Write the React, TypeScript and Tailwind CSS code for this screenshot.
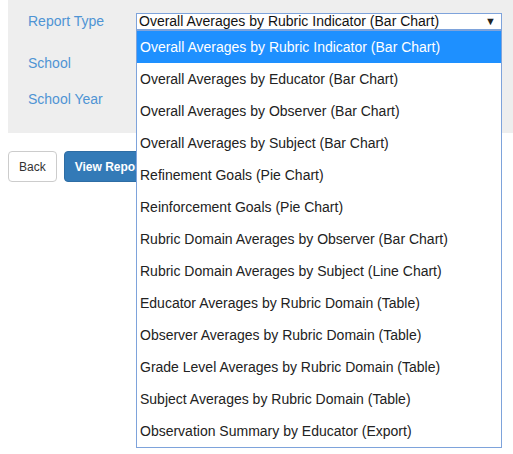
import { useState } from 'react';

const reportTypes = [
  'Overall Averages by Rubric Indicator (Bar Chart)',
  'Overall Averages by Educator (Bar Chart)',
  'Overall Averages by Observer (Bar Chart)',
  'Overall Averages by Subject (Bar Chart)',
  'Refinement Goals (Pie Chart)',
  'Reinforcement Goals (Pie Chart)',
  'Rubric Domain Averages by Observer (Bar Chart)',
  'Rubric Domain Averages by Subject (Line Chart)',
  'Educator Averages by Rubric Domain (Table)',
  'Observer Averages by Rubric Domain (Table)',
  'Grade Level Averages by Rubric Domain (Table)',
  'Subject Averages by Rubric Domain (Table)',
  'Observation Summary by Educator (Export)',
];

export default function App() {
  const [selected, setSelected] = useState(0);

  return (
    <div className="w-[513px] h-[454px] bg-white text-[14px] font-['Liberation_Sans',Arial,sans-serif] overflow-hidden">
      {/* Filter panel */}
      <div className="ml-2 h-[133px] bg-[#eeeeee] pl-5 pt-[5px]">
        <div className="flex h-[32px] items-center">
          <label className="w-[108px] text-[#4f94d4]">Report Type</label>
          <div className="relative w-[366px]">
            <div className="flex h-[17px] items-center justify-between border border-[#7ea3db] bg-white pl-[2px] pr-[5px] text-[14px] leading-[15px] text-[#111]">
              <span>{reportTypes[selected]}</span>
              <span className="text-[11px] leading-none text-[#222]">▼</span>
            </div>

            {/* Open dropdown list */}
            <ul className="absolute left-0 top-full z-10 w-[366px] border border-[#7ea3db] bg-white">
              {reportTypes.map((type, index) => (
                <li
                  key={type}
                  onClick={() => setSelected(index)}
                  className={
                    index === selected
                      ? 'flex h-[32px] items-center bg-[#1e90ff] px-[3px] pt-[1px] text-white'
                      : 'flex h-[32px] items-center px-[3px] pt-[1px] text-[#222]'
                  }
                >
                  {type}
                </li>
              ))}
            </ul>
          </div>
        </div>
        <div className="mt-[10px] flex h-[32px] items-center">
          <label className="w-[108px] text-[#4f94d4]">School</label>
          <div className="h-[17px] w-[366px] border border-[#7ea3db] bg-white" />
        </div>
        <div className="mt-[4px] flex h-[32px] items-center">
          <label className="w-[108px] text-[#4f94d4]">School Year</label>
          <div className="h-[17px] w-[366px] border border-[#7ea3db] bg-white" />
        </div>
      </div>

      {/* Actions */}
      <div className="ml-2 mt-[18px] flex gap-[7px]">
        <button className="h-[31px] rounded-[4px] border border-[#cccccc] bg-white px-[10px] text-[12px] text-[#333]">
          Back
        </button>
        <button className="h-[31px] rounded-[4px] border border-[#2e6da4] bg-[#337ab7] px-[10px] text-[12px] font-bold text-white">
          View Report
        </button>
      </div>
    </div>
  );
}
